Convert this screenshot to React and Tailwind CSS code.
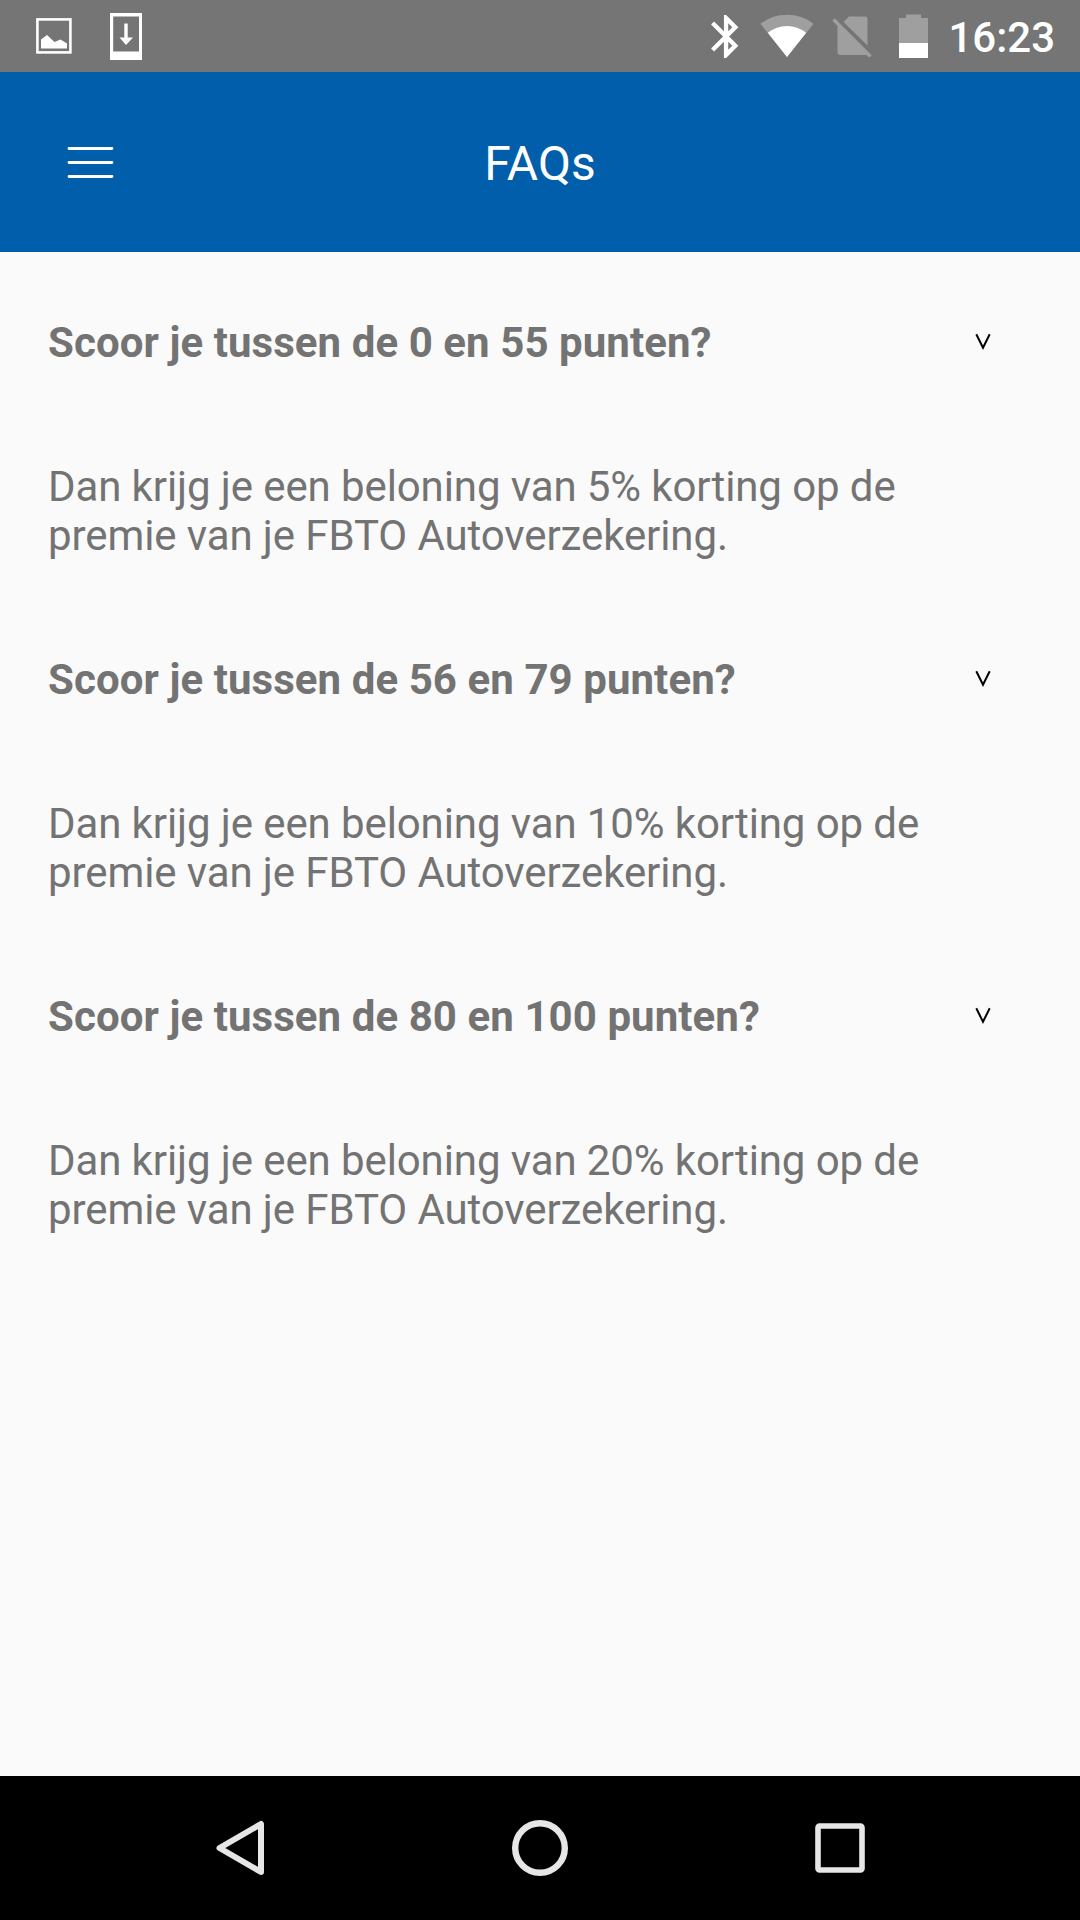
import { useState } from "react";

const FAQS = [
  {
    id: 1,
    question: "Scoor je tussen de 0 en 55 punten?",
    answer: "Dan krijg je een beloning van 5% korting op de premie van je FBTO Autoverzekering.",
  },
  {
    id: 2,
    question: "Scoor je tussen de 56 en 79 punten?",
    answer: "Dan krijg je een beloning van 10% korting op de premie van je FBTO Autoverzekering.",
  },
  {
    id: 3,
    question: "Scoor je tussen de 80 en 100 punten?",
    answer: "Dan krijg je een beloning van 20% korting op de premie van je FBTO Autoverzekering.",
  },
];

export default function App() {
  const [closed, setClosed] = useState([]);

  function toggle(id) {
    setClosed((prev) => (prev.includes(id) ? prev.filter((x) => x !== id) : [...prev, id]));
  }

  return (
    <div className="flex flex-col w-[1080px] h-[1920px] bg-[#fafafa] font-['Roboto',sans-serif]">
      <StatusBar />

      {/* Header */}
      <header className="grid grid-cols-3 items-center h-[180px] px-[67px] bg-[#005eab] text-white">
        <button type="button" aria-label="Menu" className="w-[47px]">
          <svg viewBox="0 0 47 32" fill="none" stroke="currentColor" strokeWidth={2.8} strokeLinecap="round" className="block w-[47px] h-8">
            <path d="M2 2.5H45M2 16.5H45M2 30.5H45" />
          </svg>
        </button>
        <h1 className="pt-[3px] text-center text-5xl leading-[56px]">FAQs</h1>
      </header>

      {/* FAQ list */}
      <main className="flex-1 px-12 pt-[66px]">
        {FAQS.map((faq) => (
          <FaqItem key={faq.id} faq={faq} open={!closed.includes(faq.id)} onToggle={() => toggle(faq.id)} />
        ))}
      </main>

      <NavBar />
    </div>
  );
}

function FaqItem({ faq, open, onToggle }) {
  return (
    <section className="text-[42px] leading-[49px] text-[#737373]">
      <button type="button" onClick={onToggle} className="flex items-center justify-between w-full h-[49px] pr-[41px] text-left">
        <span className="font-bold tracking-[0.07px]">{faq.question}</span>
        <svg viewBox="0 0 16 18" fill="none" stroke="#000" strokeWidth={2} className="w-4 h-[18px] -mt-px">
          <path d="M1.3 1.3L8 14.8L14.7 1.3" />
        </svg>
      </button>
      {open && <p className="w-[920px] pt-[95px] pb-[95px] tracking-[-0.1px]">{faq.answer}</p>}
    </section>
  );
}

function StatusBar() {
  return (
    <div className="flex items-center justify-between h-[72px] pl-9 pr-[25px] bg-[#757575] text-white">
      <div className="flex items-center gap-[38px]">
        {/* Screenshot notification */}
        <svg viewBox="0 0 36 36" className="w-9 h-9">
          <rect x="1.4" y="1.4" width="33" height="33" fill="none" stroke="currentColor" strokeWidth="2.6" />
          <path d="M5 21.5L11 17L18.5 24L24.5 21.5L31 25.5V30.5H5Z" fill="currentColor" />
        </svg>
        {/* Download notification */}
        <svg viewBox="0 0 32 47" fill="currentColor" className="w-8 h-[47px]">
          <path fillRule="evenodd" d="M0 0H32V47H0ZM3.2 3.5V38.5H29V3.5Z" />
          <path d="M14.3 10.5H17.7V24.5H23L16 32L9.5 24.5H14.3Z" />
        </svg>
      </div>

      <div className="flex items-center">
        <svg viewBox="5 2 13 20" fill="currentColor" className="w-7 h-[43px]">
          <path d="M17.71 7.71L12 2h-1v7.59L6.41 5 5 6.41 10.59 12 5 17.59 6.41 19 11 14.41V22h1l5.71-5.71-4.3-4.29 4.3-4.29zM13 5.83l1.88 1.88L13 9.59V5.83zm1.88 10.46L13 18.17v-3.76l1.88 1.88z" />
        </svg>
        <svg viewBox="0 0 54 44" className="w-[54px] h-11 ml-[21px]">
          <path d="M27 43L0.5 9.8Q12 0.8 27 0.8Q42 0.8 53.5 9.8Z" fill="#9f9f9f" />
          <path d="M27 43L7.8 18.8Q16.5 12 27 12Q37.5 12 46.2 18.8Z" fill="currentColor" />
        </svg>
        <svg viewBox="0 0 40 42" fill="#9f9f9f" className="w-10 h-[42px] ml-[18px]">
          <path d="M17 1.5H33Q35.5 1.5 35.5 4V30.5L11.5 7Z" />
          <path d="M5.5 8L36 39.5Q35 40 33.5 40H8.5Q5.5 40 5.5 37Z" />
          <path d="M1.5 4.5L38.5 41.5" fill="none" stroke="#9f9f9f" strokeWidth="3.4" />
        </svg>
        <svg viewBox="0 0 29 44" className="w-[29px] h-11 ml-[27px]">
          <path d="M7 0.5H22V4H29V29H0V4H7Z" fill="#9f9f9f" />
          <path d="M0 29H29V44H0Z" fill="currentColor" />
        </svg>
        <span className="ml-5 pt-[2px] text-[42px] leading-[49px] font-medium">16:23</span>
      </div>
    </div>
  );
}

function NavBar() {
  return (
    <nav className="flex items-center justify-between h-36 pl-[215px] pr-[215px] bg-black text-[#e6e6e6]">
      <button type="button" aria-label="Terug">
        <svg viewBox="0 0 50 58" fill="none" stroke="currentColor" strokeWidth={6} strokeLinejoin="round" className="block w-[50px] h-[58px]">
          <path d="M46 5V53L4.5 29Z" />
        </svg>
      </button>
      <button type="button" aria-label="Home">
        <svg viewBox="0 0 58 58" fill="none" stroke="currentColor" strokeWidth={6.4} className="block w-[58px] h-[58px]">
          <circle cx="29" cy="29" r="24.8" />
        </svg>
      </button>
      <button type="button" aria-label="Recente apps">
        <svg viewBox="0 0 50 50" fill="none" stroke="currentColor" strokeWidth={5.6} className="block w-[50px] h-[50px]">
          <rect x="3" y="3" width="44" height="44" rx="1.5" />
        </svg>
      </button>
    </nav>
  );
}
